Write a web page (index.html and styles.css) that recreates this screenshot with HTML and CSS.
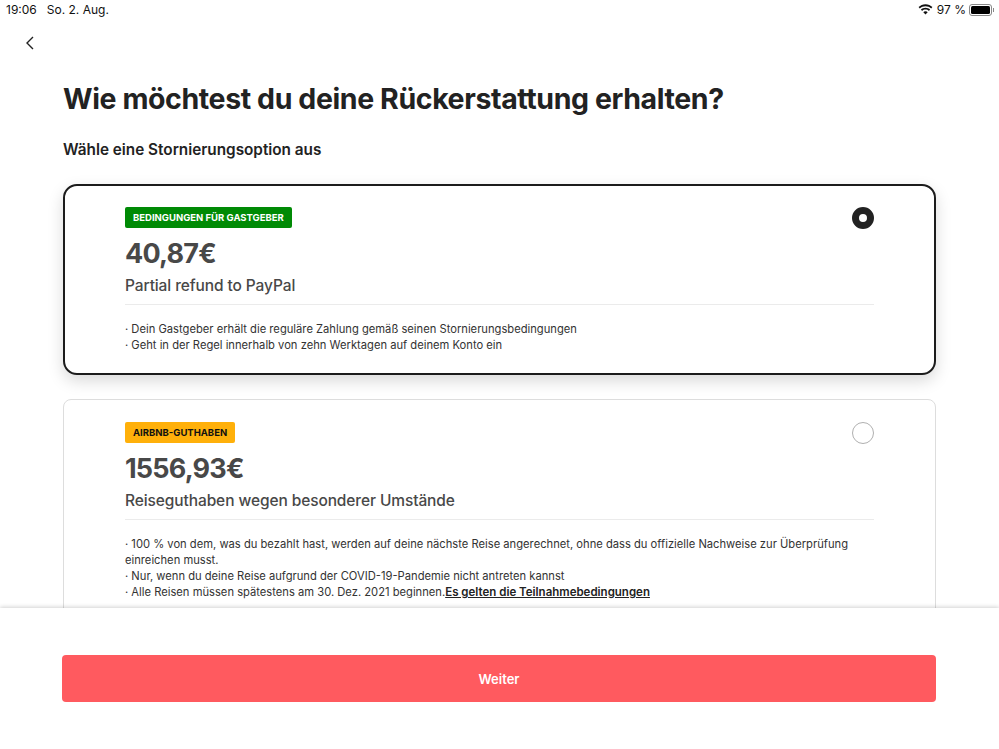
FILE: index.html
```html
<!doctype html>
<html lang="de">
<head>
	<meta charset="UTF-8">
	<title>Rückerstattung</title>
	<link rel="stylesheet" href="styles.css">
</head>
<body>
	<div class="app">
		<div class="status">
			<div class="status_left">
				<span>19:06</span>
				<span>So. 2. Aug.</span>
			</div>
			<div class="status_right">
				<svg class="wifi" width="15" height="11" viewBox="0 0 15 11">
					<path d="M7.5 2.2c2.2 0 4.200.8 5.700 2.200l1.200-1.300C12.600 1.200 10.200.2 7.500.2S2.400 1.200.6 3.100l1.200 1.300C3.300 3 5.300 2.200 7.500 2.200z" fill="#111"/>
					<path d="M7.500 5.600c1.300 0 2.500.5 3.400 1.300l1.200-1.300C10.900 4.400 9.300 3.700 7.500 3.700s-3.400.7-4.600 1.900l1.200 1.300c.9-.8 2.100-1.300 3.400-1.300z" fill="#111"/>
					<path d="M7.500 7.300c-.9 0-1.700.3-2.200.9l2.200 2.400 2.200-2.400c-.5-.6-1.300-.9-2.200-.9z" fill="#111"/>
				</svg>
				<span>97 %</span>
				<div class="battery"><div class="battery_fill"></div></div>
				<div class="battery_tip"></div>
			</div>
		</div>

		<div class="scroll">
			<div class="back">
				<svg width="10" height="14" viewBox="0 0 10 14">
					<path d="M8 1 2 7l6 6" fill="none" stroke="#222" stroke-width="1.400"/>
				</svg>
			</div>
			<div class="content">
				<h1>Wie möchtest du deine Rückerstattung erhalten?</h1>
				<h2>Wähle eine Stornierungsoption aus</h2>

				<div class="card card_active">
					<div class="card_head">
						<div>
							<span class="tag tag_green">BEDINGUNGEN FÜR GASTGEBER</span>
							<div class="amount">40,87€</div>
							<div class="sub">Partial refund to PayPal</div>
						</div>
						<div class="radio radio_on"></div>
					</div>
					<ul class="info">
						<li>· Dein Gastgeber erhält die reguläre Zahlung gemäß seinen Stornierungsbedingungen</li>
						<li>· Geht in der Regel innerhalb von zehn Werktagen auf deinem Konto ein</li>
					</ul>
				</div>

				<div class="card">
					<div class="card_head">
						<div>
							<span class="tag tag_yellow">AIRBNB-GUTHABEN</span>
							<div class="amount">1556,93€</div>
							<div class="sub">Reiseguthaben wegen besonderer Umstände</div>
						</div>
						<div class="radio"></div>
					</div>
					<ul class="info">
						<li>· 100 % von dem, was du bezahlt hast, werden auf deine nächste Reise angerechnet, ohne dass du offizielle Nachweise zur Überprüfung einreichen musst.</li>
						<li>· Nur, wenn du deine Reise aufgrund der COVID-19-Pandemie nicht antreten kannst</li>
						<li>· Alle Reisen müssen spätestens am 30. Dez. 2021 beginnen.<a href="#">Es gelten die Teilnahmebedingungen</a></li>
					</ul>
				</div>
			</div>
		</div>

		<div class="footer">
			<button class="next">Weiter</button>
		</div>
	</div>
</body>
</html>
```

FILE: styles.css
```css
html, body, div, ul, li, h1, h2{
	margin: 0;
	padding: 0;
}
body{
	font-family: 'Inter', 'Liberation Sans', sans-serif;
	color: #222;
	background-color: #fff;
}
ul{
	list-style: none;
}
.app{
	width: 999px;
	height: 749px;
	display: flex;
	flex-direction: column;
	overflow: hidden;
}
.status{
	height: 19px;
	flex: none;
	display: flex;
	justify-content: space-between;
	align-items: center;
	padding: 0 5px 0 6px;
	font-size: 12px;
	color: #111;
}
.status_left{
	display: flex;
	gap: 10px;
}
.status_right{
	display: flex;
	align-items: center;
}
.wifi{
	margin-right: 4px;
}
.battery{
	width: 23px;
	height: 12px;
	margin-left: 3px;
	padding: 1px;
	box-sizing: border-box;
	border: 1px solid #888;
	border-radius: 3px;
}
.battery_fill{
	height: 100%;
	background-color: #000;
	border-radius: 1.500px;
}
.battery_tip{
	width: 1px;
	height: 4px;
	margin-left: 1px;
	background-color: #888;
}
.scroll{
	flex: 1;
	min-height: 0;
	overflow: hidden;
}
.back{
	height: 29px;
	padding: 15px 0 0 25px;
}
.content{
	padding: 0 63px;
}
h1{
	margin-top: 18px;
	font-size: 28.500px;
	line-height: 36px;
	font-weight: 700;
	letter-spacing: -0.4px;
}
h2{
	margin-top: 23px;
	font-size: 15.300px;
	line-height: 20px;
	font-weight: 600;
}
.card{
	margin-top: 24px;
	padding: 22px 61px 22px 61px;
	border: 1px solid #ddd;
	border-radius: 8px;
	background-color: #fff;
}
.card_active{
	padding: 21px 60px 20px 60px;
	border: 2px solid #1c1c1c;
	border-radius: 14px;
	box-shadow: 0 6px 16px rgba(0, 0, 0, 0.15);
}
.card_head{
	display: flex;
	justify-content: space-between;
	align-items: flex-start;
	padding-bottom: 7px;
	border-bottom: 1px solid #ebebeb;
}
.tag{
	display: inline-block;
	height: 21px;
	line-height: 21px;
	padding: 0 8px;
	border-radius: 2px;
	font-size: 9.500px;
	font-weight: 700;
	vertical-align: top;
}
.tag_green{
	background-color: #008a05;
	color: #fff;
}
.tag_yellow{
	background-color: #ffb00a;
	color: #111;
}
.amount{
	margin-top: 8px;
	font-size: 27px;
	line-height: 36px;
	font-weight: 700;
	letter-spacing: -0.8px;
	color: #484848;
}
.sub{
	margin-top: 3px;
	font-size: 15.500px;
	line-height: 22px;
	font-weight: 500;
	letter-spacing: -0.1px;
	color: #484848;
}
.radio{
	width: 22px;
	height: 22px;
	box-sizing: border-box;
	border: 1px solid #b0b0b0;
	border-radius: 50%;
	background-color: #fff;
}
.radio_on{
	border: 7px solid #222;
}
.info{
	margin-top: 16px;
	font-size: 11.200px;
	line-height: 16px;
	color: #333;
}
.info a{
	color: #222;
	font-size: 11.500px;
	font-weight: 600;
	text-decoration: underline;
}
.footer{
	flex: none;
	height: 141px;
	padding: 47px 63px 0 62px;
	box-sizing: border-box;
	background-color: #fff;
	box-shadow: 0 -1px 4px rgba(0, 0, 0, 0.18);
	position: relative;
}
.next{
	display: block;
	width: 100%;
	height: 47px;
	border: 0;
	border-radius: 4px;
	background-color: #ff5a5f;
	color: #fff;
	font-family: inherit;
	font-size: 13px;
	font-weight: 600;
}
```
